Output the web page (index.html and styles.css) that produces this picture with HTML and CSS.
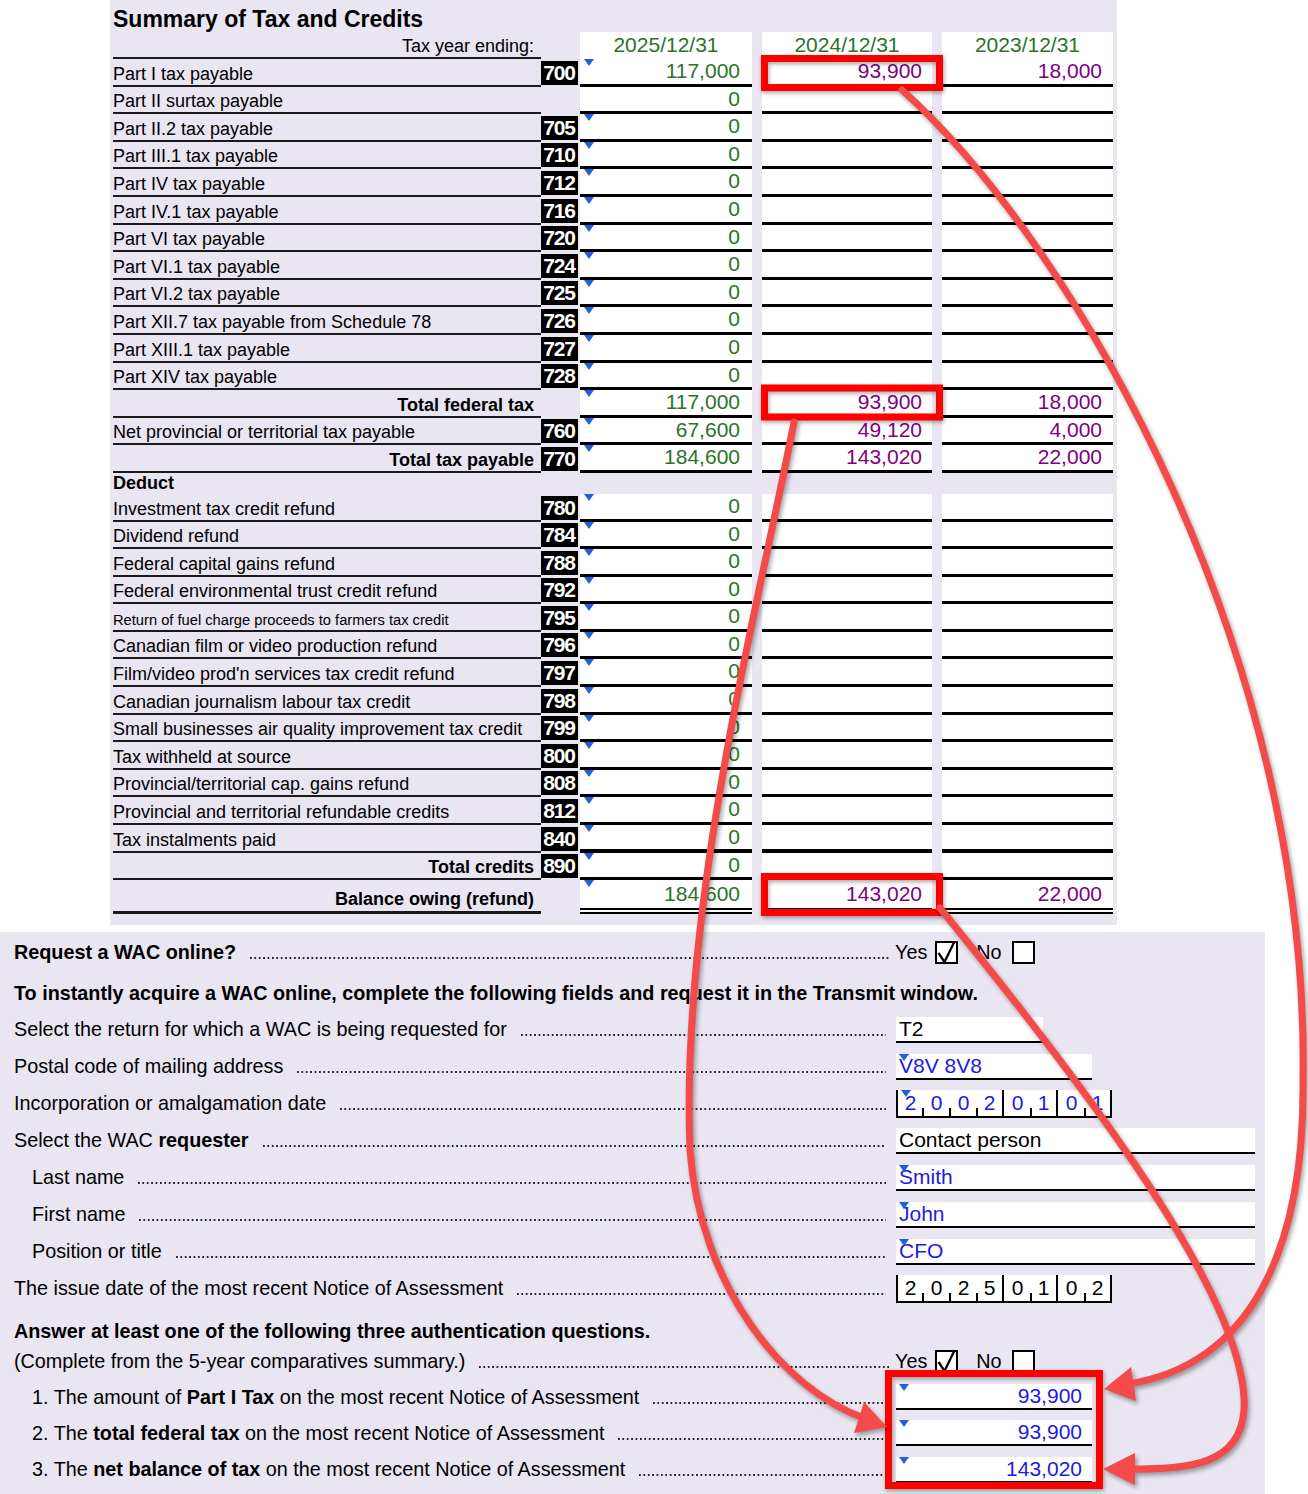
FILE: index.html
```html
<!DOCTYPE html>
<html lang="en">
<head>
<meta charset="utf-8">
<title>Summary of Tax and Credits</title>
<link rel="stylesheet" href="styles.css">
</head>
<body>
<div class="page">
  <section class="summary">
    <h1 class="title">Summary of Tax and Credits</h1>
    <div class="row head">
      <div class="lbl right plain">Tax year ending:</div><div></div>
      <div class="date c1">2025/12/31</div><div class="date c2">2024/12/31</div><div class="date c3">2023/12/31</div>
    </div>
    <div class="row"><div class="lbl">Part I tax payable</div><div class="code">700</div><div class="cell c1 mark">117,000</div><div class="cell c2">93,900</div><div class="cell c3">18,000</div></div>
    <div class="row"><div class="lbl">Part II surtax payable</div><div></div><div class="cell c1">0</div><div class="cell c2"></div><div class="cell c3"></div></div>
    <div class="row"><div class="lbl">Part II.2 tax payable</div><div class="code">705</div><div class="cell c1 mark">0</div><div class="cell c2"></div><div class="cell c3"></div></div>
    <div class="row"><div class="lbl">Part III.1 tax payable</div><div class="code">710</div><div class="cell c1 mark">0</div><div class="cell c2"></div><div class="cell c3"></div></div>
    <div class="row"><div class="lbl">Part IV tax payable</div><div class="code">712</div><div class="cell c1 mark">0</div><div class="cell c2"></div><div class="cell c3"></div></div>
    <div class="row"><div class="lbl">Part IV.1 tax payable</div><div class="code">716</div><div class="cell c1 mark">0</div><div class="cell c2"></div><div class="cell c3"></div></div>
    <div class="row"><div class="lbl">Part VI tax payable</div><div class="code">720</div><div class="cell c1 mark">0</div><div class="cell c2"></div><div class="cell c3"></div></div>
    <div class="row"><div class="lbl">Part VI.1 tax payable</div><div class="code">724</div><div class="cell c1 mark">0</div><div class="cell c2"></div><div class="cell c3"></div></div>
    <div class="row"><div class="lbl">Part VI.2 tax payable</div><div class="code">725</div><div class="cell c1 mark">0</div><div class="cell c2"></div><div class="cell c3"></div></div>
    <div class="row"><div class="lbl">Part XII.7 tax payable from Schedule 78</div><div class="code">726</div><div class="cell c1 mark">0</div><div class="cell c2"></div><div class="cell c3"></div></div>
    <div class="row"><div class="lbl">Part XIII.1 tax payable</div><div class="code">727</div><div class="cell c1 mark">0</div><div class="cell c2"></div><div class="cell c3"></div></div>
    <div class="row"><div class="lbl">Part XIV tax payable</div><div class="code">728</div><div class="cell c1 mark">0</div><div class="cell c2"></div><div class="cell c3"></div></div>
    <div class="row"><div class="lbl right">Total federal tax</div><div></div><div class="cell c1 mark">117,000</div><div class="cell c2">93,900</div><div class="cell c3">18,000</div></div>
    <div class="row"><div class="lbl">Net provincial or territorial tax payable</div><div class="code">760</div><div class="cell c1 mark">67,600</div><div class="cell c2">49,120</div><div class="cell c3">4,000</div></div>
    <div class="row"><div class="lbl right">Total tax payable</div><div class="code">770</div><div class="cell c1 mark">184,600</div><div class="cell c2">143,020</div><div class="cell c3">22,000</div></div>
    <div class="row deduct"><div class="lbl plain bold">Deduct</div></div>
    <div class="row"><div class="lbl">Investment tax credit refund</div><div class="code">780</div><div class="cell c1 mark">0</div><div class="cell c2"></div><div class="cell c3"></div></div>
    <div class="row"><div class="lbl">Dividend refund</div><div class="code">784</div><div class="cell c1 mark">0</div><div class="cell c2"></div><div class="cell c3"></div></div>
    <div class="row"><div class="lbl">Federal capital gains refund</div><div class="code">788</div><div class="cell c1 mark">0</div><div class="cell c2"></div><div class="cell c3"></div></div>
    <div class="row"><div class="lbl">Federal environmental trust credit refund</div><div class="code">792</div><div class="cell c1 mark">0</div><div class="cell c2"></div><div class="cell c3"></div></div>
    <div class="row"><div class="lbl small">Return of fuel charge proceeds to farmers tax credit</div><div class="code">795</div><div class="cell c1 mark">0</div><div class="cell c2"></div><div class="cell c3"></div></div>
    <div class="row"><div class="lbl">Canadian film or video production refund</div><div class="code">796</div><div class="cell c1 mark">0</div><div class="cell c2"></div><div class="cell c3"></div></div>
    <div class="row"><div class="lbl">Film/video prod'n services tax credit refund</div><div class="code">797</div><div class="cell c1 mark">0</div><div class="cell c2"></div><div class="cell c3"></div></div>
    <div class="row"><div class="lbl">Canadian journalism labour tax credit</div><div class="code">798</div><div class="cell c1 mark">0</div><div class="cell c2"></div><div class="cell c3"></div></div>
    <div class="row"><div class="lbl">Small businesses air quality improvement tax credit</div><div class="code">799</div><div class="cell c1 mark">0</div><div class="cell c2"></div><div class="cell c3"></div></div>
    <div class="row"><div class="lbl">Tax withheld at source</div><div class="code">800</div><div class="cell c1 mark">0</div><div class="cell c2"></div><div class="cell c3"></div></div>
    <div class="row"><div class="lbl">Provincial/territorial cap. gains refund</div><div class="code">808</div><div class="cell c1 mark">0</div><div class="cell c2"></div><div class="cell c3"></div></div>
    <div class="row"><div class="lbl">Provincial and territorial refundable credits</div><div class="code">812</div><div class="cell c1 mark">0</div><div class="cell c2"></div><div class="cell c3"></div></div>
    <div class="row thick"><div class="lbl">Tax instalments paid</div><div class="code">840</div><div class="cell c1 mark">0</div><div class="cell c2"></div><div class="cell c3"></div></div>
    <div class="row"><div class="lbl right">Total credits</div><div class="code">890</div><div class="cell c1 mark">0</div><div class="cell c2"></div><div class="cell c3"></div></div>
    <div class="row balance"><div class="lbl right">Balance owing (refund)</div><div></div><div class="cell c1 mark">184,600</div><div class="cell c2">143,020</div><div class="cell c3">22,000</div></div>
  </section>

  <section class="wac">
    <div class="q r-req">
      <div class="lhs yesw"><b>Request a WAC online?</b><span class="lead"></span></div>
      <div class="yn yes-gap"><span>Yes</span><span class="box"><svg viewBox="0 0 23 23" width="23" height="23"><path d="M3.5 12 L9.5 21 L19.5 0.5" fill="none" stroke="#000" stroke-width="2.3"/></svg></span><span class="no">No</span><span class="box"></span></div>
    </div>
    <div class="q r-inst"><b>To instantly acquire a WAC online, complete the following fields and request it in the Transmit window.</b></div>
    <div class="q">
      <div class="lhs"><span>Select the return for which a WAC is being requested for</span><span class="lead"></span></div>
      <div class="fld w-t2">T2</div>
    </div>
    <div class="q">
      <div class="lhs"><span>Postal code of mailing address</span><span class="lead"></span></div>
      <div class="fld w-pc blue mark">V8V 8V8</div>
    </div>
    <div class="q">
      <div class="lhs"><span>Incorporation or amalgamation date</span><span class="lead"></span></div>
      <div class="comb blue mark"><span class="t">2</span><span class="t">0</span><span class="t">0</span><span class="g">2</span><span class="t">0</span><span class="g">1</span><span class="t">0</span><span class="g">1</span></div>
    </div>
    <div class="q">
      <div class="lhs"><span>Select the WAC <b>requester</b></span><span class="lead"></span></div>
      <div class="fld w-full">Contact person</div>
    </div>
    <div class="q ind">
      <div class="lhs"><span>Last name</span><span class="lead"></span></div>
      <div class="fld w-full blue mark">Smith</div>
    </div>
    <div class="q ind">
      <div class="lhs"><span>First name</span><span class="lead"></span></div>
      <div class="fld w-full blue mark">John</div>
    </div>
    <div class="q ind">
      <div class="lhs"><span>Position or title</span><span class="lead"></span></div>
      <div class="fld w-full blue mark">CFO</div>
    </div>
    <div class="q">
      <div class="lhs"><span>The issue date of the most recent Notice of Assessment</span><span class="lead"></span></div>
      <div class="comb"><span class="t">2</span><span class="t">0</span><span class="t">2</span><span class="g">5</span><span class="t">0</span><span class="g">1</span><span class="t">0</span><span class="g">2</span></div>
    </div>
    <div class="q r-ans"><b>Answer at least one of the following three authentication questions.</b></div>
    <div class="q r-comp">
      <div class="lhs yesw"><span>(Complete from the 5-year comparatives summary.)</span><span class="lead"></span></div>
      <div class="yn yes-gap"><span>Yes</span><span class="box"><svg viewBox="0 0 23 23" width="23" height="23"><path d="M3.5 12 L9.5 21 L19.5 0.5" fill="none" stroke="#000" stroke-width="2.3"/></svg></span><span class="no">No</span><span class="box"></span></div>
    </div>
    <div class="q ind r-a1">
      <div class="lhs"><span>1. The amount of <b>Part I Tax</b> on the most recent Notice of Assessment</span><span class="lead"></span></div>
      <div class="fld w-num blue mark">93,900</div>
    </div>
    <div class="q ind r-a2">
      <div class="lhs"><span>2. The <b>total federal tax</b> on the most recent Notice of Assessment</span><span class="lead"></span></div>
      <div class="fld w-num blue mark">93,900</div>
    </div>
    <div class="q ind r-a3">
      <div class="lhs"><span>3. The <b>net balance of tax</b> on the most recent Notice of Assessment</span><span class="lead"></span></div>
      <div class="fld w-num blue mark">143,020</div>
    </div>
  </section>

  <svg class="annot" width="1308" height="1494" viewBox="0 0 1308 1494">
    <g class="boxes" fill="none" stroke="#ff0000" stroke-width="7">
      <rect x="764.5" y="58.5" width="175" height="29"/>
      <rect x="764.5" y="388" width="175" height="29"/>
      <rect x="764.5" y="876.5" width="175" height="36"/>
      <rect x="888.5" y="1373.5" width="211" height="112"/>
    </g>
    <g class="arrows">
      <path d="M902 90 C1080 250 1310 660 1303 1080 C1305 1250 1250 1365 1128 1384" fill="none" stroke="#f44a4a" stroke-width="7" stroke-linecap="round"/>
      <polygon points="1104,1389 1131,1367 1136,1401" fill="#f44a4a"/>
      <path d="M794 422 C760 600 680 900 690 1150 C700 1285 782 1389 864 1418" fill="none" stroke="#f44a4a" stroke-width="7" stroke-linecap="round"/>
      <polygon points="887,1427 864,1402 854,1433" fill="#f44a4a"/>
      <path d="M940 908 C1080 1080 1250 1300 1244 1410 C1240 1465 1190 1469 1130 1469" fill="none" stroke="#f44a4a" stroke-width="7" stroke-linecap="round"/>
      <polygon points="1103,1469 1135,1453 1135,1485" fill="#f44a4a"/>
    </g>
  </svg>
</div>
</body>
</html>
```

FILE: styles.css
```css
* { box-sizing: border-box; }

html, body {
  margin: 0;
  padding: 0;
  background: #ffffff;
}

body {
  font-family: "Liberation Sans", Arial, sans-serif;
  color: #000;
}

.page {
  position: relative;
  width: 1308px;
  height: 1494px;
  overflow: hidden;
}

/* ---------- top summary panel ---------- */
.summary {
  margin-left: 110px;
  width: 1007px;
  background: #e9e5f1;
  padding: 0 4px 11px 3px;
}

.title {
  margin: 0;
  height: 32px;
  padding-top: 6px;
  font-size: 23px;
  line-height: 26px;
  font-weight: bold;
}

.row {
  display: grid;
  grid-template-columns: 428px 39px 172px 180px 181px;
  height: 27.6px;
}

.row.head { height: 27px; }
.row.deduct { height: 21px; }
.row.balance { height: 34px; }

.lbl {
  display: flex;
  align-items: flex-end;
  border-bottom: 2px solid #1a1a1a;
  font-size: 18px;
  line-height: 21px;
  white-space: nowrap;
}

.lbl.small { font-size: 14.7px; line-height: 19px; }

.lbl.right {
  justify-content: flex-end;
  padding-right: 7px;
  font-weight: bold;
}

.lbl.plain.right { font-weight: normal; }

.lbl.plain.bold {
  border-bottom: none;
  font-weight: bold;
  align-items: center;
}

.row.balance .lbl {
  border-bottom-width: 3px;
  padding-bottom: 1px;
}

.code {
  align-self: end;
  width: 37px;
  height: 24px;
  margin-bottom: 2px;
  background: #000;
  color: #fff;
  font-weight: bold;
  font-size: 21px;
  letter-spacing: -1.2px;
  line-height: 24px;
  text-align: center;
  text-indent: -1px;
}

.date {
  background: #fff;
  color: #2b722b;
  font-size: 21px;
  line-height: 26px;
  text-align: center;
}

.cell {
  position: relative;
  background: #fff;
  border-bottom: 3px solid #000;
  font-size: 21px;
  line-height: 24px;
  text-align: right;
  white-space: nowrap;
}

.row.thick .cell { border-bottom-width: 4px; }

.row.balance .cell {
  border-bottom: 6px double #000;
  line-height: 28px;
}

.c1 { color: #2b722b; padding-right: 12px; }
.c2 { color: #800080; padding-right: 10px; margin-left: 10px; }
.c3 { color: #800080; padding-right: 11px; margin-left: 10px; }
.date.c1, .date.c2, .date.c3 { padding-right: 0; color: #2b722b; }

.mark::before {
  content: "";
  position: absolute;
  left: 4px;
  top: 0;
  border-left: 5px solid transparent;
  border-right: 5px solid transparent;
  border-top: 7px solid #2060e0;
}

/* ---------- bottom WAC panel ---------- */
.wac {
  width: 1265px;
  margin-top: 7px;
  background: #e9e5f1;
  padding: 2px 0 12px 14px;
  font-size: 19.8px;
}

.q {
  display: flex;
  align-items: center;
  height: 37px;
  white-space: nowrap;
}

.q.ind { padding-left: 18px; }

.r-req { height: 36px; }
.r-inst { height: 41px; padding-top: 5px; }
.r-ans { height: 36px; margin-top: 6px; }
.r-comp { height: 24px; }
.r-a1 { height: 36px; margin-top: 6px; }
.r-a2 { height: 36px; }
.r-a3 { height: 37px; }

.lhs {
  display: flex;
  align-items: baseline;
  width: 872px;
  line-height: 23px;
}

.q.ind .lhs { width: 854px; }

.lhs.yesw { width: 876px; }

.lead {
  flex: 1;
  height: 2px;
  margin-left: 14px;
  background-image: linear-gradient(to right, #222 0, #222 1.7px, transparent 1.7px);
  background-size: 4.4px 1.9px;
  background-repeat: repeat-x;
  background-position: left bottom;
}

.yn {
  display: flex;
  align-items: center;
  margin-left: 5px;
  line-height: 23px;
}

.box {
  width: 23px;
  height: 23px;
  border: 2px solid #000;
  background: #fff;
  margin-left: 8px;
  position: relative;
  overflow: visible;
}

.box svg {
  position: absolute;
  left: -2px;
  top: -2px;
}

.no { margin-left: 18px; }
.yn .no + .box { margin-left: 10px; }

.fld {
  position: relative;
  margin-left: 10px;
  height: 26px;
  border-bottom: 2px solid #000;
  background: #fff;
  font-size: 21px;
  line-height: 24px;
  padding-left: 3px;
}

.fld.mark::before, .comb.mark::before { left: 3px; z-index: 1; }

.w-t2 { width: 147px; }
.w-pc { width: 196px; }
.w-full { width: 359px; }
.w-num { width: 196px; text-align: right; padding-right: 10px; }

.blue { color: #1a1ae6; }

.comb {
  position: relative;
  display: flex;
  margin-left: 10px;
  height: 28px;
  border-left: 2px solid #000;
  border-bottom: 2px solid #000;
  background: #fff;
  font-size: 21px;
}

.comb span {
  position: relative;
  width: 27px;
  text-align: center;
  line-height: 26px;
}

.comb span:first-child { width: 25px; }

.comb span.g { border-right: 2px solid #000; }

.comb span.t::after {
  content: "";
  position: absolute;
  right: -1px;
  bottom: 0;
  width: 2px;
  height: 8px;
  background: #000;
}

/* ---------- annotation overlay ---------- */
.annot {
  position: absolute;
  left: 0;
  top: 0;
  pointer-events: none;
}

.annot .boxes { filter: drop-shadow(1px 2px 2px rgba(0, 0, 0, 0.35)); }
.annot .arrows { filter: drop-shadow(2px 3px 2px rgba(0, 0, 0, 0.35)); }
```
